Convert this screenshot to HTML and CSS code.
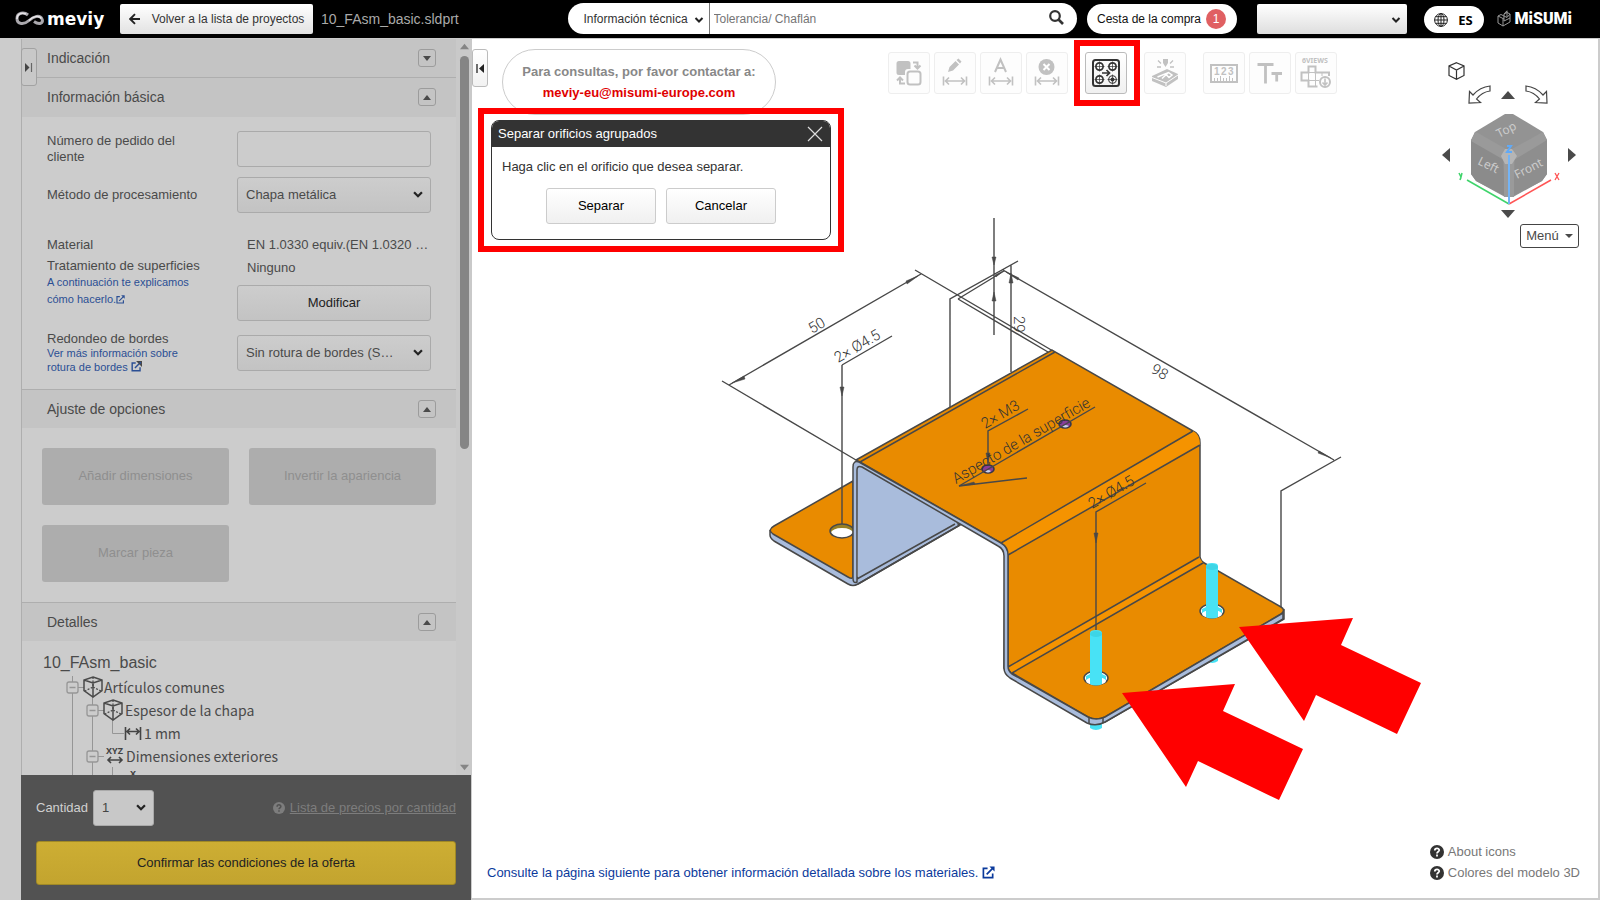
FILE: index.html
```html
<!DOCTYPE html>
<html lang="es">
<head>
<meta charset="utf-8">
<title>meviy - 10_FAsm_basic.sldprt</title>
<link rel="stylesheet" href="styles.css">
</head>
<body>
<svg width="0" height="0" class="defs" aria-hidden="true">
  <symbol id="chev" viewBox="0 0 10 8"><path d="M1.5 2 5 5.5 8.500 2" fill="none" stroke="currentColor" stroke-width="2"/></symbol>
  <symbol id="ext" viewBox="0 0 14 14"><path d="M6 2.500H1.500V12.500H11.500V8M5 9 12 2" fill="none" stroke="currentColor" stroke-width="1.800"/><path d="M8 .500H13.500V6Z" fill="currentColor"/></symbol>
  <symbol id="help" viewBox="0 0 14 14"><circle cx="7" cy="7" r="7" fill="currentColor"/><path d="M4.800 5.400C4.800 2.600 9.300 2.700 9.200 5.300 9.100 6.800 7 6.900 7 8.500M7 9.600V11.400" fill="none" stroke="var(--mark)" stroke-width="1.800"/></symbol>
  <symbol id="tri-up" viewBox="0 0 10 6"><path d="M5 0 10 6H0Z" fill="currentColor"/></symbol>
  <symbol id="tri-down" viewBox="0 0 10 6"><path d="M5 6 10 0H0Z" fill="currentColor"/></symbol>
  <symbol id="dim" viewBox="0 0 42 42"><path d="M9.500 24.500V33.500M32.500 24.500V33.500M11 29H31M15 25.500 11.500 29 15 32.500M27 25.500 30.500 29 27 32.500" fill="none" stroke="currentColor" stroke-width="1.600"/></symbol>
  <symbol id="part" viewBox="0 0 20 22"><path d="M10 1 19 4V14.500L10 21 1 14.500V4ZM1 4 10 7 19 4M10 7V21" fill="none" stroke="currentColor" stroke-width="1.500"/><path d="M10 1V11L2 15M10 11 18 15" fill="none" stroke="currentColor" stroke-width="1.300" stroke-dasharray="2 1.500"/></symbol>
</svg>

<header class="topbar">
  <a class="brand" href="#" aria-label="meviy">
    <svg width="30" height="16" viewBox="0 0 30 16"><path d="M13 4C9 .500 2 1.500 2 7.500S9 14 14 9.500 25 3.500 27 8 24 14 19 10.500" fill="none" stroke="#aaa8ad" stroke-width="3"/><path d="M11 3C6 1 2 3 2 8M14 9.500C18 5 24 4 26.500 7.500" fill="none" stroke="#e6e4e8" stroke-width="1.500"/></svg>
    <span>meviy</span>
  </a>
  <button class="back" type="button">
    <svg width="11" height="12" viewBox="0 0 11 12"><path d="M11 6H1.500M6 1.200 1.200 6 6 10.800" fill="none" stroke="#222" stroke-width="1.900"/></svg>
    Volver a la lista de proyectos
  </button>
  <span class="filename">10_FAsm_basic.sldprt</span>
  <form class="search">
    <div class="pick search-kind">
      <select aria-label="Tipo de búsqueda"><option>Información técnica</option></select>
      <svg width="10" height="8"><use href="#chev"/></svg>
    </div>
    <input type="text" placeholder="Tolerancia/ Chaflán" aria-label="Buscar">
    <button type="button" class="lens" aria-label="Buscar"><svg width="15" height="15" viewBox="0 0 15 15"><circle cx="6" cy="6" r="4.800" fill="none" stroke="#333" stroke-width="2.200"/><path d="m9.500 9.500 4.500 4.500" stroke="#333" stroke-width="2.600"/></svg></button>
  </form>
  <button class="cart" type="button">Cesta de la compra <span class="count">1</span></button>
  <div class="pick account"><select aria-label="Cuenta"><option></option></select><svg width="10" height="8"><use href="#chev"/></svg></div>
  <button class="lang" type="button">
    <svg width="14" height="14" viewBox="0 0 14 14" fill="none" stroke="#222" stroke-width="1"><circle cx="7" cy="7" r="6.400"/><ellipse cx="7" cy="7" rx="3" ry="6.400"/><path d="M7 .500V13.500M.500 7H13.500M1.500 3.700H12.500M1.500 10.300H12.500"/></svg>
    ES
  </button>
  <a class="misumi" href="#">
    <svg width="14" height="17" viewBox="0 0 14 17" fill="none" stroke="#999" stroke-width="1"><path d="M1 6 4 4.500 7 6V11L13 8V4L10 2.500 7 4V6M1 6V13L6 16 13 12V8M1 6 6 8.500V16M7 6 10 7.500 13 4M7 4 10 .800 10 7M6 8.500 7 8"/></svg>
    <span>MiSUMi</span>
  </a>
</header>

<div class="work">
  <aside class="side">
    <button class="tab tab-side" type="button" aria-label="Plegar panel"><svg width="8" height="9" viewBox="0 0 8 9"><path d="M0 0 4.500 4.500 0 9Z" fill="#444"/><path d="M6.500 0V9" stroke="#666" stroke-width="1.200"/></svg></button>
    <div class="scroll">
      <div class="content">
        <section>
          <h2 class="bar">Indicación <button type="button" aria-label="Abrir Indicación"><svg width="8" height="5"><use href="#tri-down"/></svg></button></h2>
        </section>
        <section>
          <h2 class="bar">Información básica <button type="button" aria-label="Cerrar Información básica"><svg width="8" height="5"><use href="#tri-up"/></svg></button></h2>
          <div class="form">
            <label for="pedido" class="two">Número de pedido del cliente</label>
            <input id="pedido" type="text">
            <label for="metodo">Método de procesamiento</label>
            <div class="pick box"><select id="metodo"><option>Chapa metálica</option></select><svg width="12" height="9"><use href="#chev"/></svg></div>
            <div class="names">
              <p>Material</p>
              <p>Tratamiento de superficies</p>
              <a href="#" class="wide">A continuación te explicamos cómo hacerlo.<svg width="9" height="9"><use href="#ext"/></svg></a>
            </div>
            <div class="values">
              <p>EN 1.0330 equiv.(EN 1.0320 …</p>
              <p>Ninguno</p>
              <button type="button" class="btn">Modificar</button>
            </div>
            <div class="names edge">
              <label for="bordes">Redondeo de bordes</label>
              <a href="#">Ver más información sobre rotura de bordes <svg width="11" height="11"><use href="#ext"/></svg></a>
            </div>
            <div class="pick box"><select id="bordes"><option>Sin rotura de bordes (S…</option></select><svg width="12" height="9"><use href="#chev"/></svg></div>
          </div>
        </section>
        <section>
          <h2 class="bar line">Ajuste de opciones <button type="button" aria-label="Cerrar Ajuste de opciones"><svg width="8" height="5"><use href="#tri-up"/></svg></button></h2>
          <div class="options">
            <button type="button" disabled>Añadir dimensiones</button>
            <button type="button" disabled>Invertir la apariencia</button>
            <button type="button" disabled>Marcar pieza</button>
          </div>
        </section>
        <section>
          <h2 class="bar line">Detalles <button type="button" aria-label="Cerrar Detalles"><svg width="8" height="5"><use href="#tri-up"/></svg></button></h2>
          <h3 class="root">10_FAsm_basic</h3>
          <ul class="tree">
            <li><svg width="62" height="23" viewBox="0 0 62 23"><path class="wire" d="M30.500 0V6M30.500 17V23M36 11.500H42M50.500 20V23"/><path class="knob" d="M27 6H34Q36 6 36 8V15Q36 17 34 17H27Q25 17 25 15V8Q25 6 27 6ZM27.500 11.500H33.500"/><use href="#part" x="41" y="0" width="20" height="22"/></svg>Artículos comunes</li>
            <li><svg width="83" height="23" viewBox="0 0 83 23"><path class="wire" d="M30.500 0V23M50.500 0V6M50.500 17V23M56 11.500H62M70.500 21V23"/><path class="knob" d="M47 6H54Q56 6 56 8V15Q56 17 54 17H47Q45 17 45 15V8Q45 6 47 6ZM47.500 11.500H53.500"/><use href="#part" x="61" y="0" width="20" height="22"/></svg>Espesor de la chapa</li>
            <li><svg width="102" height="23" viewBox="0 0 102 23"><path class="wire" d="M30.500 0V23M50.500 0V23M70.500 0V11.500H82"/><path class="mark" d="M83.500 5V18M98.500 5V18M84 9.500H98M88 6.500 85 9.500 88 12.500M94 6.500 97 9.500 94 12.500"/></svg>1 mm</li>
            <li><svg width="84" height="23" viewBox="0 0 84 23"><path class="wire" d="M30.500 0V23M50.500 0V6M50.500 17V23M56 11.500H62M70.500 22V23"/><path class="knob" d="M47 6H54Q56 6 56 8V15Q56 17 54 17H47Q45 17 45 15V8Q45 6 47 6ZM47.500 11.500H53.500"/><text x="64" y="9">XYZ</text><path class="mark" d="M65.500 15H80.500M69 12 66 15 69 18M77 12 80 15 77 18"/></svg>Dimensiones exteriores</li>
            <li><svg width="102" height="23" viewBox="0 0 102 23"><path class="wire" d="M30.500 0V23M50.500 0V23M70.500 0V23"/><text x="88" y="9">X</text></svg></li>
          </ul>
        </section>
      </div>
      <div class="rail" aria-hidden="true">
        <svg width="9" height="7"><use href="#tri-up"/></svg>
        <div class="lane"><div class="thumb"></div></div>
        <svg width="9" height="7"><use href="#tri-down"/></svg>
      </div>
    </div>
    <footer class="order">
      <div class="qty">
        <label for="cant">Cantidad</label>
        <div class="pick box"><select id="cant"><option>1</option></select><svg width="12" height="9"><use href="#chev"/></svg></div>
        <svg class="q" width="12" height="12"><use href="#help"/></svg>
        <a href="#">Lista de precios por cantidad</a>
      </div>
      <button type="button" class="confirm">Confirmar las condiciones de la oferta</button>
    </footer>
  </aside>

  <main class="viewer">
    <svg class="model" viewBox="472 39 1126 859" role="img" aria-label="Modelo 3D de la pieza">
      <g class="dims">
        <path d="M722 381 856 460M729 385 921 274M915 270 1053 351M958 299 1048 352M950 408V299L1018 261M958 299 1004 271M1011 265V372M994 218V335M1003 270 1334 460M1341 457 1281 491V610M842 365 892 336"/>
        <path class="tip" d="M732 383 744 376 745 379ZM918 276 906 281 907 284ZM992 257H996L994 265ZM992 301H996L994 292ZM1009 283H1013L1011 273ZM1006 272 1019 278 1018 280ZM1331 458 1318 453 1319 451ZM1003 271 996 277 995 275Z"/>
      </g>
      <g class="solid">
        <path class="pin" d="M1207 648H1218V661Q1212 665 1207 661ZM1090 718H1102V728Q1096 732 1090 728Z"/>
        <path class="steel" d="M770 531V535Q770 538 774 541L848 584Q853 587 858 584L960 525 955 522 857 578Z"/>
        <path class="orange" d="M853 481 774 526Q767 530 773 534L848 577Q853 580 853 576Z"/>
        <ellipse cx="842" cy="531" rx="12" ry="7" fill="#988024"/>
        <ellipse cx="842" cy="533" rx="11" ry="5" fill="#fff"/>
        <ellipse class="edge" cx="842" cy="531" rx="12" ry="7"/>
        <path class="inner" d="M857 464 958 523 858 580Z"/>
        <path class="edge" d="M857 579 955 524M858 584 960 525"/>
        <path class="steel" d="M1005 548 1004 668Q1006 674 1012 678L1087 722Q1096 726 1105 722L1284 619V610L1096 690Z"/>
        <path class="orange" d="M856 460 1052 350 1193 431Q1200 434 1200 443V557Q1201 562 1206 564L1281 607Q1286 610 1281 614L1105 717Q1096 721 1088 717L1012 673Q1008 670 1008 667V555Q1008 547 1001 543L860 462Z"/>
        <path class="glow" d="M1193 431Q1200 434 1200 445L1008 555Q1008 547 1001 543ZM1199 557 1203 563 1012 673 1008 667Z"/>
        <path class="edge" d="M1193 431 1001 543M1200 445 1008 555M1199 557 1008 667M1203 563 1012 673M860 462 1055 352"/>
        <path class="steel" d="M853 578V467Q853 460 859 462L1001 543Q1008 547 1008 555V666Q1008 671 1012 674L1088 717Q1096 721 1105 717L1283 613V619L1105 722Q1096 727 1087 723L1010 678Q1004 674 1004 668V556Q1004 549 998 546L862 467Q857 465 857 470V582Q853 584 853 578Z"/>
        <path class="edge" d="M1089 717V723M1103 718V723"/>
        <g class="pins">
          <ellipse class="hole" cx="1212" cy="611" rx="12" ry="7"/><path class="pin" d="M1202 609Q1212 602 1222 609V613H1202Z"/><ellipse cx="1212" cy="614" rx="10" ry="4" fill="#fff"/><path class="pin" d="M1206 566V617Q1212 620 1218 617V566Q1218 563 1212 563T1206 566Z"/><ellipse cx="1212" cy="567" rx="6" ry="3" fill="#3dd5e6"/>
          <ellipse class="hole" cx="1096" cy="678" rx="12" ry="7"/><path class="pin" d="M1086 676Q1096 669 1106 676V680H1086Z"/><ellipse cx="1096" cy="681" rx="10" ry="4" fill="#fff"/><path class="pin" d="M1090 633V684Q1096 687 1102 684V633Q1102 630 1096 630T1090 633Z"/><ellipse cx="1096" cy="634" rx="6" ry="3" fill="#3dd5e6"/>
        </g>
        <g class="tap"><ellipse cx="988" cy="469" rx="6" ry="4"/><path d="M985 471Q988 469 991 471Q988 474 985 471Z"/><ellipse cx="1065" cy="424" rx="6" ry="4"/><path d="M1062 426Q1065 424 1069 426Q1065 429 1062 426Z"/></g>
      </g>
      <g class="dims">
        <path d="M842 524V365M988 466V431L1028 409M1095 407 959 486 1027 478M1096 630V512L1146 483"/>
        <path class="tip" d="M840 387H844L842 396ZM986 453H990L988 463ZM1094 533H1098L1096 543ZM959 486 974 482 975 484Z"/>
        <text transform="translate(812 334) rotate(-30)">50</text>
        <text transform="translate(838 363) rotate(-30)">2× Ø4.5</text>
        <text transform="translate(985 429) rotate(-30)">2× M3</text>
        <text transform="translate(956 484) rotate(-30)">Aspecto de la superficie</text>
        <text transform="translate(1092 509) rotate(-30)">2× Ø4.5</text>
        <text transform="translate(1150 372) rotate(30)">98</text>
        <text transform="translate(1014 316) rotate(90)">29</text>
      </g>
      <path class="pointer" d="M1122 693 1235 684 1223 711 1303 749 1279 800 1198 761 1186 787ZM1239 627 1353 618 1341 645 1421 683 1397 734 1316 695 1304 721Z"/>
    </svg>

    <div class="overlay">
      <button class="tab" type="button" aria-label="Desplegar panel"><svg width="8" height="9" viewBox="0 0 8 9"><path d="M8 0 3 4.500 8 9Z" fill="#222"/><path d="M1 0V9" stroke="#222" stroke-width="1.300"/></svg></button>
      <div class="contact"><p>Para consultas, por favor contactar a:</p><a href="mailto:meviy-eu@misumi-europe.com">meviy-eu@misumi-europe.com</a></div>
      <div class="tools">
        <div class="group">
          <button type="button" aria-label="Intercambiar"><svg viewBox="0 0 42 42"><path d="M11 9H20Q22.500 9 22.500 11.500V17H20Q17 17 17 20V23H11Q8.500 23 8.500 20.500V11.500Q8.500 9 11 9Z" fill="currentColor"/><rect x="19.500" y="19.500" width="13" height="13" rx="2.500" class="s"/><path class="s" d="M25 10.500H29.500V16M26.500 13.500 29.500 16.500 32.500 13.500M17 31.500H12V25.500M9 28.500 12 25.500 15 28.500"/></svg></button>
          <button type="button" aria-label="Editar dimensión"><svg viewBox="0 0 42 42"><use href="#dim"/><path d="M14 20 15.500 15 21.500 9 25 12.500 19 18.500ZM22.500 8 24.500 6.500 27.500 9.500 26 11.500Z" fill="currentColor"/></svg></button>
          <button type="button" aria-label="Texto de dimensión"><svg viewBox="0 0 42 42"><use href="#dim"/><path class="s" d="M15 20 20.500 7.500 26 20M17 16H24"/></svg></button>
          <button type="button" aria-label="Eliminar dimensión"><svg viewBox="0 0 42 42"><use href="#dim"/><circle cx="20.500" cy="15" r="8" fill="currentColor"/><path d="M17.500 12 23.500 18M23.500 12 17.500 18" stroke="#fff" stroke-width="2"/></svg></button>
        </div>
        <button type="button" class="on" aria-label="Separar orificios agrupados"><svg viewBox="0 0 42 42"><rect x="8" y="8" width="26" height="26" rx="2.500" class="s"/><g fill="none" stroke="currentColor" stroke-width="1.700"><circle cx="14.500" cy="14.500" r="3.600"/><circle cx="27.500" cy="14.500" r="3.600"/><circle cx="14.500" cy="27.500" r="3.600"/><circle cx="27.500" cy="27.500" r="3.800" stroke-width="1.100"/><path d="M17 21H24M21.500 18 24.500 21 21.500 24"/></g><circle cx="27.500" cy="27.500" r="2" fill="currentColor"/><path d="M9.500 14.500H19.500M14.500 9.500V19.500M22.500 14.500H32.500M27.500 9.500V19.500M9.500 27.500H19.500M14.500 22.500V32.500M22.500 27.500H32.500M27.500 22.500V32.500" stroke="currentColor" stroke-width=".700"/></svg></button>
        <button type="button" aria-label="Marcar"><svg viewBox="0 0 42 42"><path d="M8 24 23 17 34 22V27L22 35 8 29Z" fill="currentColor"/><path d="M8 25.500 22 31 34 23M22 31V34" fill="none" stroke="#fff"/><path d="M13.500 25 24.500 20.500 28 23 25 25.500 22 22.500M18 26.500 24 21" fill="none" stroke="#fff" stroke-width="1.500"/><path d="M19 7H24V11L21.500 15 19 11Z" fill="currentColor"/><path d="M14 8.500 17 11.500M29 8.500 26 11.500M13 15H17M26 15H30" stroke="currentColor" stroke-width="1.300"/></svg></button>
        <div class="group">
          <button type="button" aria-label="Medir"><svg viewBox="0 0 42 42"><path d="M8 13H34V30H8Z" class="s"/><path d="M11.500 29V26M14.500 29V26M17.500 29V24M20.500 29V26M23.500 29V26M26.500 29V24M29.500 29V26" stroke="currentColor"/><text x="11" y="23" class="digits">1</text><text x="18" y="23" class="digits">2</text><text x="25" y="23" class="digits">3</text></svg></button>
          <button type="button" aria-label="Tamaño de texto"><svg viewBox="0 0 42 42"><path d="M8.500 12.500H24.500M16.500 12.500V31.500M22.500 21.500H33M27.700 21.500V29.500" fill="none" stroke="currentColor" stroke-width="2.800"/></svg></button>
          <button type="button" aria-label="Seis vistas"><svg viewBox="0 0 42 42"><text x="7" y="11" class="views">6VIEWS</text><path class="s" d="M22.500 34.500H13.500V28.500H6.500V20.500H13.500V14.500H20.500V20.500H34V24"/><path d="M13.500 20.500H20.500V34M13.500 20.500V28.500H24M27 20.500V24" fill="none" stroke="currentColor"/><circle cx="30" cy="30" r="5" class="s"/><path d="M30 26.500V32.500M27.500 30.500 30 33 32.500 30.500" fill="none" stroke="currentColor" stroke-width="1.600"/></svg></button>
        </div>
      </div>
      <nav class="compass" aria-label="Vista">
        <button type="button" class="iso" aria-label="Isométrica"><svg width="17" height="18" viewBox="0 0 17 18"><path d="M8.500.700 16 4V13.500L8.500 17.300 1 13.500V4ZM1 4 8.500 8 16 4M8.500 8V17.300" fill="none" stroke="#333" stroke-width="1.200"/></svg></button>
        <div class="spin">
          <button type="button" aria-label="Girar a la izquierda"><svg width="23" height="19" viewBox="0 0 23 19"><path d="M22 1V6Q14 7 8.500 14L12.500 17.500 1 18 1.500 6.500 5 10Q12 2 22 1Z" class="bend"/></svg></button>
          <button type="button" aria-label="Arriba"><svg width="14" height="8" viewBox="0 0 14 8"><path d="M7 0 14 8H0Z"/></svg></button>
          <button type="button" aria-label="Girar a la derecha"><svg width="23" height="19" viewBox="0 0 23 19"><path d="M1 1V6Q9 7 14.500 14L10.500 17.500 22 18 21.500 6.500 18 10Q11 2 1 1Z" class="bend"/></svg></button>
        </div>
        <div class="turn">
          <button type="button" aria-label="Izquierda"><svg width="8" height="14" viewBox="0 0 8 14"><path d="M0 7 8 0V14Z"/></svg></button>
          <svg class="cube" width="102" height="102" viewBox="1458 104 102 102">
            <path d="M1505 114H1513L1543 132 1547 140V174L1542 181 1513 197H1505L1476 181 1471 174V140L1475 132Z" fill="#939393"/>
            <path d="M1476 139 1503 154V161L1505 196 1476 181 1471 174V140Z" fill="#8b8b8b"/>
            <path d="M1542 139 1515 154V161L1513 196 1542 181 1547 174V140Z" fill="#8e8e8e"/>
            <path d="M1475 132 1478 133 1506 149H1512L1541 133 1543 132 1547 140 1514 160V197H1504V160L1471 141Z" fill="#9a9a9a"/>
            <path d="M1505 149H1512L1517 156 1512 164H1505L1501 156Z" fill="#b5b5b5"/>
            <text transform="translate(1499 138) rotate(-27)">Top</text>
            <text transform="translate(1477 164) rotate(26)">Left</text>
            <text transform="translate(1517 179) rotate(-27)">Front</text>
            <path d="M1467 180 1509 204" stroke="#3fd46b" stroke-width="1.500"/><path d="M1551 180 1509 204" stroke="#f55" stroke-width="1.500"/><path d="M1509 155V204" stroke="#74b4f5" stroke-width="2"/>
            <path d="M1507 146H1511L1507 152H1512" stroke="#60aaf8" stroke-width="2" fill="none"/>
            <path d="M1459 173 1461 177 1462 173M1461 177 1460 180" stroke="#3fd46b" stroke-width="1.500" fill="none"/><path d="M1555 173 1559 180M1559 173 1555 180" stroke="#f55" stroke-width="1.300"/>
          </svg>
          <button type="button" aria-label="Derecha"><svg width="8" height="14" viewBox="0 0 8 14"><path d="M8 7 0 0V14Z"/></svg></button>
        </div>
        <div class="spin low"><button type="button" aria-label="Abajo"><svg width="14" height="8" viewBox="0 0 14 8"><path d="M7 8 14 0H0Z"/></svg></button></div>
        <button type="button" class="menu">Menú <svg width="8" height="4"  viewBox="0 0 8 4"><path d="M0 0H8L4 4Z"/></svg></button>
      </nav>
    </div>

    <div class="frame">
      <section class="dialog" role="dialog" aria-labelledby="dlg">
        <header><h2 id="dlg">Separar orificios agrupados</h2><button type="button" aria-label="Cerrar"><svg width="16" height="16" viewBox="0 0 16 16"><path d="M1 1 15 15M15 1 1 15" stroke="#ddd" stroke-width="1.200"/></svg></button></header>
        <p>Haga clic en el orificio que desea separar.</p>
        <div class="acts"><button type="button" class="btn">Separar</button><button type="button" class="btn">Cancelar</button></div>
      </section>
    </div>

    <div class="notes">
      <a href="#">Consulte la página siguiente para obtener información detallada sobre los materiales. <svg width="13" height="13"><use href="#ext"/></svg></a>
      <ul>
        <li><a href="#"><svg width="14" height="14"><use href="#help"/></svg>About icons</a></li>
        <li><a href="#"><svg width="14" height="14"><use href="#help"/></svg>Colores del modelo 3D</a></li>
      </ul>
    </div>
  </main>
</div>
</body>
</html>
```

FILE: styles.css
```css
* { box-sizing: border-box; }
body { margin: 0; height: 100vh; display: flex; flex-direction: column; overflow: hidden; font: 13px/16px "Liberation Sans", Arial, sans-serif; color: #4a4a4a; background: #fff; }
.defs { position: absolute; }
h2, h3, p, ul { margin: 0; padding: 0; }
h2, h3 { font-weight: 400; }
ul { list-style: none; }
a { text-decoration: none; }
button, input, select { font: inherit; color: inherit; margin: 0; padding: 0; }
button { border: 0; background: none; display: flex; align-items: center; justify-content: center; }
svg { flex: none; }

.pick { position: relative; display: flex; }
.pick select { appearance: none; width: 100%; height: 100%; border: 0; background: none; outline: 0; }
.pick > svg { position: absolute; top: 50%; right: 6px; margin-top: -5px; color: #222; pointer-events: none; }

/* Top bar */
.topbar { height: 39px; padding: 0 28px 1px 15px; background: #000; border-bottom: 1px solid #ccc; display: flex; align-items: center; font-size: 12px; flex: none; }
.brand { display: flex; align-items: center; gap: 2px; width: 105px; color: #fff; font: bold 17px/22px "DejaVu Sans", sans-serif; }
.back { width: 193px; height: 30px; gap: 12px; border-radius: 2px; color: #333; background: linear-gradient(#fff, #e2e2e2); }
.filename { margin-left: 8px; font-size: 14px; color: #aaa; }
.search { margin-left: auto; width: 509px; height: 31px; border-radius: 16px; background: #fff; display: flex; align-items: stretch; }
.search-kind { width: 142px; border-right: 1px solid #777; }
.search-kind select { padding-left: 16px; color: #333; }
.pick.search-kind > svg { right: 5px; margin-top: -3px; }
.search input { flex: 1; min-width: 0; border: 0; padding: 0 4px; background: none; outline: 0; }
.search input::placeholder { color: #757575; opacity: 1; }
.lens { width: 40px; padding-bottom: 3px; }
.cart { margin-left: 10px; width: 150px; height: 30px; border-radius: 15px; background: #fff; color: #111; gap: 5px; }
.count { width: 20px; height: 20px; border-radius: 50%; background: #e06062; color: #fff; line-height: 20px; }
.account { margin-left: 20px; width: 150px; height: 30px; border-radius: 2px; background: linear-gradient(#fff, #dedede); }
.pick.account > svg { margin-top: -3px; }
.lang { margin: 2px 0 0 17px; width: 60px; height: 27px; border-radius: 14px; background: #fff; color: #000; gap: 10px; font: bold 13px/18px "Noto Sans", sans-serif; }
.misumi { margin-left: 13px; display: flex; align-items: center; gap: 4px; color: #fff; font: 900 16px/22px Roboto, sans-serif; }

.work { flex: 1; min-height: 0; display: flex; }

/* Left panel */
.side { width: 472px; padding-left: 21px; background: #ccc; display: flex; flex-direction: column; position: relative; }
.tab { width: 16px; height: 38px; margin-top: 10px; border: 1px solid #bbb; border-radius: 3px; background: linear-gradient(#fff, #f2f2f2); flex: none; }
.tab-side { position: absolute; left: 21px; top: 9px; margin: 0; border-color: #a2a2a2; background: #c8c8c8; }
.scroll { flex: 1; min-height: 0; display: flex; border-left: 1px solid #aeaeae; }
.content { flex: 1; overflow: hidden; }
.bar { height: 39px; padding: 0 20px 0 25px; background: #c4c4c4; border-bottom: 1px solid #aeaeae; display: flex; align-items: center; justify-content: space-between; font-size: 14px; line-height: 18px; }
section + section > .bar { border-bottom-color: #c4c4c4; }
section > .bar.line { border-top: 1px solid #aeaeae; border-bottom: 0; }
.bar button { width: 18px; height: 18px; border: 1px solid #9c9c9c; border-radius: 3px; }
.form { display: grid; grid-template-columns: 1fr 194px; gap: 10px 30px; padding: 14px 25px 15px; align-items: center; }
.form > .two { width: 150px; align-self: start; padding-top: 2px; }
.form input, .form .box { height: 36px; width: 100%; border: 1px solid #aaa; border-radius: 3px; background: #ccc; outline: 0; }
.form .box, .values .btn { background: linear-gradient(#cdcdcd, #c3c3c3); }
.form select { padding-left: 8px; }
.names { align-self: start; }
.names, .values { padding-top: 14px; }
.names p + p { margin-top: 5px; }
.names a { display: block; width: 155px; font-size: 11px; line-height: 14px; color: #2b4f94; }
.names .wide { line-height: 17px; }
.names svg { vertical-align: -1px; }
.names.edge { padding-top: 0; }
.edge label { display: block; line-height: 15px; }
.values p { padding-left: 10px; margin-bottom: 7px; white-space: nowrap; }
.values .btn { width: 100%; color: #222; border-color: #aaa; margin-top: 9px; }
.btn { height: 36px; border: 1px solid #ccc; border-radius: 3px; background: linear-gradient(#fff, #f0f0f0); color: #000; }
.options { display: grid; grid-template-columns: 1fr 1fr; gap: 20px; padding: 20px; }
.options button { height: 57px; border-radius: 3px; background: #adadad; color: #8f8f8f; padding-bottom: 2px; }
.root { padding: 12px 20px 3px 21px; font-size: 16px; line-height: 20px; }
.tree li { height: 23px; padding-left: 20px; display: flex; align-items: center; font: 14px/23px "Noto Sans CJK JP", "Noto Sans", sans-serif; white-space: nowrap; }
.wire, .knob { fill: none; stroke: #969696; }
.knob { stroke-width: 1.3; }
.mark { fill: none; stroke: #444; stroke-width: 1.6; }
.tree text { font: bold 9px "Noto Sans", sans-serif; fill: #444; }
.rail { width: 16px; padding: 4px 0; background: #c9c9c9; color: #858585; display: flex; flex-direction: column; align-items: center; gap: 6px; }
.lane { flex: 1; width: 9px; }
.thumb { height: 56%; border-radius: 5px; background: #858585; }
.order { margin-right: 1px; padding: 15px; background: #525252; }
.qty { display: flex; align-items: center; gap: 5px; color: #d0d0d0; }
.qty .box { width: 61px; height: 36px; border: 1px solid #aaa; border-radius: 3px; color: #444; background: #c8c8c8; }
.qty select { padding-left: 8px; }
.qty .q { margin-left: auto; color: #7d7d7d; --mark: #525252; }
.qty a { color: #7d7d7d; text-decoration: underline; }
.confirm { width: 100%; height: 44px; margin-top: 15px; border: 1px solid #a08926; border-radius: 3px; background: linear-gradient(#cdae33, #c3a42f); color: #222; }

/* Viewer */
.viewer { flex: 1; position: relative; display: flex; flex-direction: column; justify-content: space-between; border: solid #ccc; border-width: 0 2px 2px 0; }
.model { position: absolute; inset: 0; width: 100%; height: 100%; }
.dims path { fill: none; stroke: #484848; stroke-width: 1.4; }
.dims .tip { fill: #484848; stroke-width: .5; }
.dims text { font: 300 15px Roboto, sans-serif; fill: #333; }
.edge, .orange, .steel { stroke: #484848; stroke-width: 1.5; }
.edge { fill: none; }
.orange { fill: #e98b00; }
.glow { fill: #f59300; }
.steel, .inner { fill: #a9bcdc; }
.pin { fill: #48e2f5; }
.hole { fill: #fff; stroke: #484848; stroke-width: 1.5; }
.tap ellipse { fill: #8a3d98; stroke: #383848; stroke-width: 1.6; }
.tap path { fill: #c6d2ec; }
.pointer { fill: #f00; }

.overlay { position: relative; display: flex; align-items: flex-start; padding-right: 19px; }
.contact { margin: 10px 0 0 14px; width: 274px; height: 66px; padding-top: 14px; border: 1px solid #ccc; border-radius: 33px; text-align: center; font-weight: 700; color: #888; }
.contact a { display: block; margin-top: 5px; color: #e00000; }
.tools { margin: 13px 0 0 auto; display: flex; gap: 17px; }
.group { display: flex; gap: 4px; }
.tools button { width: 42px; height: 42px; border: 1px solid #eee; border-radius: 3px; background: #fdfdfd; color: #c1c1c1; position: relative; }
.tools svg { width: 42px; height: 42px; }
.tools .s { fill: none; stroke: currentColor; stroke-width: 2; }
.tools .on { color: #333; border-color: #bbb; background: linear-gradient(#fff, #f0f0f0); }
.on::after { content: ""; position: absolute; inset: -13px -14px -13px -12px; border: 6px solid #f00; }
.digits { font: bold 10px "Liberation Sans", sans-serif; fill: currentColor; }
.views { font: bold 7px "Noto Sans", sans-serif; fill: currentColor; }
.compass { margin-left: 105px; padding-top: 23px; width: 137px; display: flex; flex-direction: column; }
.compass button svg { fill: #4a4a4a; }
.iso { margin-left: 6px; align-self: flex-start; }
.spin { display: flex; justify-content: center; align-items: center; gap: 10px; padding-right: 5px; margin-top: 5px; }
.spin.low { margin-top: 4px; }
.compass .bend { fill: #fff; stroke: #444; stroke-width: 1.2; }
.turn { display: flex; justify-content: space-between; align-items: center; padding-right: 3px; }
.cube text { font: 12px "Noto Sans", sans-serif; fill: #ccc; }
.menu { align-self: flex-end; margin-top: 6px; width: 59px; height: 24px; border: 1px solid #444; border-radius: 3px; background: #fff; gap: 6px; }

/* Highlighted dialog laid over the model */
.frame { position: absolute; left: 6px; top: 69px; width: 366px; padding: 6px 7px; border: 6px solid #f00; }
.dialog { height: 120px; border: 1px solid #333; border-radius: 8px; background: #fff; overflow: hidden; color: #333; }
.dialog header { height: 26px; padding: 0 7px 0 6px; display: flex; align-items: center; justify-content: space-between; background: #333; color: #fff; }
.dialog h2 { font-size: 13px; }
.dialog p { padding: 12px 10px 0; }
.acts { display: flex; justify-content: center; gap: 10px; margin-top: 13px; }
.acts .btn { width: 110px; }

.notes { position: relative; display: flex; justify-content: space-between; align-items: flex-end; padding: 0 18px 17px 15px; --mark: #fff; }
.notes > a { color: #0b3a9c; }
.notes > a svg { vertical-align: -2px; }
.notes li + li { margin-top: 5px; }
.notes li a { display: flex; align-items: center; gap: 4px; color: #777; }
.notes li svg { color: #333; }
```
